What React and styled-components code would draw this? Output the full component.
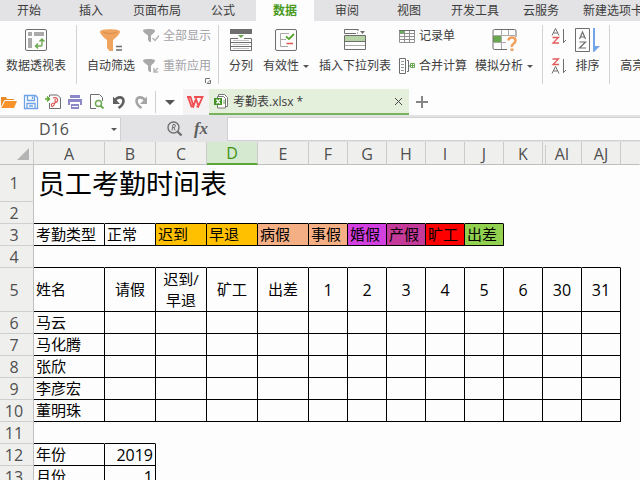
import React from "react";
import styled, { createGlobalStyle } from "styled-components";

const GlobalStyle = createGlobalStyle`
  *, *::before, *::after { box-sizing: border-box; }
  body {
    margin: 0;
    background: #fdfdfd;
    color: #3c3c3c;
    font-family: "Open Sans", "Noto Sans CJK SC", sans-serif;
    font-size: 12px;
    line-height: 16px;
    overflow: hidden;
  }
  button, input { font: inherit; color: inherit; margin: 0; }
  svg { display: block; flex: none; }
`;

const Window = styled.div`
  display: flex;
  flex-direction: column;
  height: 100vh;
  overflow: hidden;
  white-space: nowrap;
`;

/* ---------- menu tabs ---------- */

const MenuBar = styled.nav`
  display: flex;
  flex: none;
  gap: 4px;
  height: 21px;
  background: #e3e3e5;
  overflow: hidden;
`;

const MenuTab = styled.button`
  flex: none;
  min-width: 58px;
  padding: 0 9px;
  border: 0;
  background: ${(p) => (p.$active ? "#fdfdfd" : "transparent")};
  color: ${(p) => (p.$active ? "#4a9a1f" : "#3c3c3c")};
  font-weight: ${(p) => (p.$active ? 700 : 400)};
`;

/* ---------- ribbon ---------- */

const Ribbon = styled.div`
  display: flex;
  flex: none;
  height: 67px;
  padding: 4px 0;
  background: #fdfdfd;
  overflow: hidden;
`;

const Group = styled.div`
  position: relative;
  display: flex;
  flex: none;
  gap: 10px;
  padding: 3px 9px 0 10px;
  height: 59px;
  border-right: 1px solid #d2d2d2;
  &:first-child { padding: 3px 10px 0 6px; }
  &:last-child { border-right: 0; }
`;

const BigButton = styled.button`
  display: flex;
  flex-direction: column;
  align-items: center;
  gap: 6px;
  height: 46px;
  padding: 0;
  border: 0;
  background: none;
`;

const IconBox = styled.span`
  display: flex;
  align-items: center;
  justify-content: center;
  height: 24px;
`;

const Label = styled.span`
  display: flex;
  align-items: center;
  gap: 4px;
  height: 16px;
`;

const Stack = styled.div`
  display: flex;
  flex-direction: column;
  gap: 14px;
  margin: 0 -2px;
`;

const SmallButton = styled.button`
  display: flex;
  align-items: center;
  gap: 4px;
  height: 16px;
  padding: 0;
  border: 0;
  background: none;
  &:disabled { color: #a3a3a8; }
`;

const Launcher = styled.button`
  position: absolute;
  right: 7px;
  bottom: 0;
  padding: 0;
  border: 0;
  background: none;
`;

/* ---------- quick access and document tabs ---------- */

const QuickBar = styled.div`
  display: flex;
  flex: none;
  height: 27px;
  padding-top: 1px;
  background: #fdfdfd;
`;

const QuickTools = styled.div`
  display: flex;
  flex: none;
  align-items: center;
  gap: 6px;
  padding-left: 1px;
`;

const IconButton = styled.button`
  display: flex;
  align-items: center;
  justify-content: center;
  width: 16px;
  height: 20px;
  padding: 0;
  border: 0;
  background: none;
`;

const Divider = styled.span`
  width: 1px;
  height: 22px;
  background: #cfcfcf;
`;

const HomeTab = styled.button`
  display: flex;
  align-items: center;
  justify-content: center;
  width: 26px;
  margin-left: 5px;
  padding: 0 2px 0 0;
  border: 0;
  background: #f5f3f3;
`;

const DocTab = styled.div`
  display: flex;
  flex: none;
  align-items: center;
  gap: 5px;
  width: 200px;
  padding: 1px 3px 0 5px;
  background: #e4efdc;
  border-bottom: 2px solid #78b35c;
`;

const DocName = styled.span`
  flex: 1;
`;

const AddTab = styled(IconButton)`
  width: 26px;
  height: 26px;
`;

/* ---------- formula bar ---------- */

const FormulaBar = styled.div`
  display: flex;
  flex: none;
  align-items: stretch;
  height: 27px;
  padding: 2px 0 1px;
  background: #e3e3e5;
`;

const NameBox = styled.div`
  display: flex;
  align-items: center;
  flex: none;
  width: 121px;
  background: #fdfdfd;
  border: 1px solid #d0d0d2;
  border-left: 0;
`;

const NameInput = styled.input`
  flex: 1;
  min-width: 0;
  padding: 0;
  border: 0;
  outline: 0;
  background: none;
  color: #505050;
  font-size: 16px;
  line-height: 20px;
  text-align: center;
`;

const NameDrop = styled(IconButton)`
  width: 12px;
`;

const FormulaTools = styled.div`
  display: flex;
  flex: none;
  align-items: center;
  justify-content: flex-end;
  gap: 10px;
  width: 106px;
  padding-right: 18px;
`;

const FxButton = styled(IconButton)`
  color: #606060;
  font-family: "Liberation Serif", serif;
  font-size: 17px;
  font-style: italic;
  font-weight: 700;
`;

const FormulaInput = styled.input`
  flex: 1;
  min-width: 0;
  border: 1px solid #d0d0d2;
  border-right: 0;
  outline: 0;
  background: #fdfdfd;
`;

/* ---------- sheet ---------- */

const Sheet = styled.div`
  flex: 1;
  min-height: 0;
  overflow: hidden;
`;

const Grid = styled.table`
  width: 100%;
  min-width: 640px;
  table-layout: fixed;
  border-collapse: separate;
  border-spacing: 0;
  color: #000;
`;

const Col = styled.col`
  width: ${(p) => (p.$w ? `${p.$w}px` : "auto")};
`;

const ColHead = styled.th`
  position: relative;
  height: 23px;
  padding: 1px 0 0;
  background: ${(p) => (p.$active ? "#d5e8d0" : "#eff0ee")};
  color: ${(p) => (p.$active ? "#3f9414" : "#4f4f4f")};
  border-right: 1px solid ${(p) => (p.$last ? "transparent" : "#cbcbcb")};
  border-bottom: ${(p) => (p.$active ? "2px solid #5ba636" : "1px solid #bfbfbf")};
  font-size: 16px;
  font-weight: 400;
  line-height: 20px;
  &::before {
    content: "";
    position: absolute;
    display: ${(p) => (p.$gap ? "block" : "none")};
    top: 3px;
    bottom: 0;
    left: 2px;
    width: 1px;
    background: #cbcbcb;
  }
`;

const Corner = styled(ColHead)`
  & svg { margin-left: 17px; }
`;

const Row = styled.tr`
  height: ${(p) => p.$h}px;
`;

const RowHead = styled.th`
  padding: 0 5px 0 0;
  background: #eff0ee;
  color: #4f4f4f;
  border-right: 1px solid #bfbfbf;
  border-bottom: 1px solid #cfcfcf;
  font-size: 16px;
  font-weight: 400;
  line-height: 20px;
`;

const Cell = styled.td`
  padding: 0 2px;
  background: ${(p) => p.$fill || "transparent"};
  border-right: 1px solid ${(p) => (p.$right ? "#000" : "transparent")};
  border-bottom: 1px solid ${(p) => (p.$bottom ? "#000" : "transparent")};
  text-align: ${(p) => p.$align || "left"};
  font-size: ${(p) => (p.$number ? 16 : 15)}px;
  line-height: ${(p) => (p.$number ? 20 : 21)}px;
  white-space: pre-line;
`;

const TitleCell = styled(Cell)`
  padding: 2px 4px 0;
  font-size: 27px;
  line-height: 32px;
  white-space: nowrap;
`;

/* ---------- icons ---------- */

const G = "#6e6e6e";

const Caret = ({ w = 6, fill = "#555" }) => (
  <svg width={w} height={Math.ceil(w / 2)} viewBox="0 0 6 3"><path d="M0 0h6L3 3z" fill={fill} /></svg>
);

const PivotIcon = () => (
  <svg width="24" height="24" viewBox="0 0 24 24" fill="none">
    <rect x="1.500" y="1.500" width="21" height="21" rx="1.500" stroke={G} />
    <path d="M4 4h4v4H4zM10 4h10v4H10zM4 10h4v10H4z" fill="#aaa" />
    <path d="M18 11.500v5q0 1.500-1.500 1.500h-5M15.500 13.500l2.500-2.500 2.500 2.500M14 15.500L11.500 18l2.500 2.500" stroke="#69a84f" strokeWidth="1.400" />
  </svg>
);

const FilterIcon = () => (
  <svg width="24" height="24" viewBox="0 0 24 24">
    <path d="M1 3.500C1 .500 21 .500 21 3.500c0 2-2.500 5-7 8.500V23H10.500L8 20V12C3.500 8.500 1 5.500 1 3.500z" fill="#efa560" />
    <path d="M4 4C8 6 14 6 18 4" stroke="#d98b45" fill="none" />
    <path d="M17 18.500h6M17 22h6" stroke={G} strokeWidth="1.500" />
  </svg>
);

const ShowAllIcon = () => (
  <svg width="16" height="16" viewBox="0 0 16 16">
    <path d="M0 2.500C0 .500 12 .500 12 2.500 12 4 10.500 5.500 8 7.500V14H6.500L5 12V7.500C2 5.500 0 4 0 2.500z" fill="#a9a9a9" />
    <path d="M9.500 10l2.500 2.500L16 7.500" stroke="#b5b5b5" strokeWidth="1.500" fill="none" />
  </svg>
);

const ReapplyIcon = () => (
  <svg width="16" height="16" viewBox="0 0 16 16">
    <path d="M0 2.500C0 .500 12 .500 12 2.500 12 4 10.500 5.500 8 7.500V14H6.500L5 12V7.500C2 5.500 0 4 0 2.500z" fill="#a9a9a9" />
    <path d="M11 10v4h4M11.500 13.500L15 10" stroke="#b5b5b5" strokeWidth="1.500" fill="none" />
  </svg>
);

const SplitIcon = () => (
  <svg width="24" height="24" viewBox="0 0 24 24">
    <path d="M1 1h22v5H1z" fill={G} />
    <path d="M9 7h6l-3 3z" fill="#69a84f" />
    <path d="M1.500 10.500H9M15 10.500h7.500v12h-21v-12M1.500 14.500h21M1.500 18.500h21" stroke={G} fill="none" />
    <path d="M4 12.500h16M4 16.500h16M4 20.500h16" stroke="#c3c3c3" />
  </svg>
);

const ValidIcon = () => (
  <svg width="24" height="24" viewBox="0 0 24 24" fill="none">
    <rect x="1.500" y="1.500" width="21" height="21" rx="1.500" stroke={G} />
    <path d="M15 5.500H6.500v13H14M6.500 11.500H12" stroke="#aaa" />
    <path d="M12 8.500l3 2.500 5-5" stroke="#59a52e" strokeWidth="1.800" />
    <path d="M12.500 15.500H19" stroke="#e4544e" strokeWidth="1.500" />
  </svg>
);

const DropListIcon = () => (
  <svg width="24" height="24" viewBox="0 0 24 24">
    <path d="M15 1.500H1.500v4H13M15 1v2" stroke={G} fill="none" />
    <path d="M14 4.500h1v1h-1zM17 3h5l-2.500 3z" fill={G} />
    <rect x="2" y="8" width="20" height="5" fill="#b7d3a5" />
    <path d="M1.500 7.500h21v14h-21zM1.500 13.500h21" stroke={G} fill="none" />
    <path d="M2 17.500h20" stroke="#aaa" />
  </svg>
);

const FormIcon = () => (
  <svg width="16" height="14" viewBox="0 0 16 14">
    <path d="M.500 1.500h15v12H.500zM.500 4.500h15M.500 7.500h15M.500 10.500h15M5.500 1v12M10.500 1v12" stroke="#909090" fill="none" />
    <path d="M1 1h4v3H1z" fill="#69b05f" />
    <path d="M0 1.500h16" stroke={G} />
  </svg>
);

const MergeIcon = () => (
  <svg width="16" height="16" viewBox="0 0 16 16" fill="none">
    <path d="M.500.500h6v15h-6z" stroke={G} />
    <path d="M2 3.500h3M2 6.500h3M2 9.500h3M2 12.500h3" stroke="#999" />
    <path d="M8 2.500h1.500v11H8M9.500 8H12" stroke={G} />
    <path d="M11.500 5.500h4v4h-4zM12 7.500h3M13.500 6v3" stroke="#69a84f" />
  </svg>
);

const WhatIfIcon = () => (
  <svg width="25" height="24" viewBox="0 0 25 24" fill="none">
    <path d="M1 8h8v6H1z" fill="#69a84f" />
    <path d="M15 21.500H2.500q-1.500 0-1.500-1.500V3q0-1.500 1.500-1.500h20q1.500 0 1.500 1.500v6" stroke={G} />
    <path d="M1 7.500h22M1 14.500h13M9.500 2v19M16.500 2v6" stroke="#aaa" />
    <path d="M16.500 12.500q0-3 3.500-3t3.500 3q0 2-2 3.200t-1.500 3.300" stroke="#efa05c" strokeWidth="2.500" />
    <path d="M18.500 20.500h3V23h-3z" fill="#efa05c" />
  </svg>
);

const LetterPair = ({ down }) => (
  <svg width="16" height="16" viewBox="0 0 16 16" fill="none">
    <path d={down ? "M1 15.500L4.500 8.500l3.500 7M2.500 13h4" : "M1 7.500L4.500.500 8 7.500M2.500 5h4"} stroke={G} />
    <path d={down ? "M1.500 1h6L2 6.500h6" : "M1.500 9.500h6L2 15h6"} stroke="#e25a5a" strokeWidth="1.300" />
    <path d="M12.500 1v14M12.500 14.500L15 12" stroke={G} />
  </svg>
);

const SortIcon = () => (
  <svg width="25" height="24" viewBox="0 0 25 24" fill="none">
    <path d="M.500.500h14v23H.500z" stroke={G} />
    <path d="M4.500 11L7.500 4l3 7M5.500 9h4M4.500 14h6l-6 6h6.500" stroke={G} strokeWidth="1.200" />
    <path d="M18 0h2v18h5l-6 6h-1z" fill="#72a5e8" />
  </svg>
);

const LauncherIcon = () => (
  <svg width="6" height="6" viewBox="0 0 6 6"><path d="M.500 5V.500H5M5.500 2v3.500H2z" stroke="#777" fill="none" /></svg>
);

const OpenIcon = () => (
  <svg width="16" height="16" viewBox="0 0 16 16">
    <path d="M0 13V3h5l1 2h7v2H4z" fill="#e98a25" />
    <path d="M4 7h12l-3 7H0z" fill="#f8922a" />
    <path d="M13.500 6.500h-10L.500 13" stroke="#fdfdfd" fill="none" />
  </svg>
);

const SaveIcon = () => (
  <svg width="16" height="16" viewBox="0 0 16 16" fill="none" stroke="#6fa3e8" strokeWidth="1.300">
    <path d="M1.500 1.500h11l2 2v11h-13zM4.500 1.500v5h7v-5M4 14.500v-5h8v5M6 12h4" />
    <path d="M9.500 2.500v2.500" />
  </svg>
);

const PdfIcon = () => (
  <svg width="16" height="16" viewBox="0 0 16 16" fill="none">
    <path d="M4.500 3V1h8l3 3v10.500h-11V9" stroke={G} />
    <path d="M0 5h4M2 2.500L4.500 5 2 7.500" stroke="#59a52e" strokeWidth="1.300" />
    <path d="M8 4q4-1 4.500 1.500T9.500 9q-3.500 0-3 2.500t2.500-.500T10 5" stroke="#d95757" strokeWidth="1.200" />
  </svg>
);

const PrintIcon = () => (
  <svg width="16" height="16" viewBox="0 0 16 16">
    <path d="M3 1h10v3H3zM1 5h14v6h-2V9H3v2H1zM4 10h8v5H4z" fill="#8c88c9" />
    <path d="M3 8.500h10M5 12.500h6" stroke="#fff" />
  </svg>
);

const PreviewIcon = () => (
  <svg width="16" height="16" viewBox="0 0 16 16" fill="none">
    <path d="M7 14.500H1.500V.500h9l3 3V7" stroke={G} />
    <circle cx="9.500" cy="9.500" r="3" stroke="#69a84f" strokeWidth="1.400" />
    <path d="M11.500 11.500l3 3" stroke="#69a84f" strokeWidth="1.800" />
  </svg>
);

const UndoIcon = ({ color, flip }) => (
  <svg width="16" height="16" viewBox="0 0 16 16" fill="none">
    <g transform={flip ? "translate(16 0) scale(-1 1)" : undefined}>
      <path d="M4 6.500C6 2.500 12.500 2 12.500 7c0 3-2 5-5 7" stroke={color} strokeWidth="2.600" />
      <path d="M2 2.500v7.500h7z" fill={color} />
    </g>
  </svg>
);

const WpsIcon = () => (
  <svg width="17" height="12" viewBox="0 0 17 12" fill="none" stroke="#f04c52" strokeWidth="1.800">
    <path d="M0 1h3.500l3 9L9 3l2.500 7L15.500 1H7" />
    <path d="M1 1l3.500 9.500H7M9.500 10.500h2.500" />
  </svg>
);

const SheetIcon = () => (
  <svg width="14" height="15" viewBox="0 0 14 15">
    <path d="M4.500 3V.500h6l3 3v9h-3" fill="#fff" stroke="#777" />
    <path d="M3.500 2.500h6l2 2v9.500h-8z" fill="#fff" stroke="#777" />
    <path d="M0 4h8v7H0z" fill="#459326" />
    <path d="M2.500 5.500l3.500 4M6 5.500l-3.500 4" stroke="#fff" strokeWidth="1.200" />
    <path d="M9 7h2M9 9h2" stroke="#69a84f" />
  </svg>
);

const CloseIcon = () => (
  <svg width="9" height="9" viewBox="0 0 9 9"><path d="M1 1l7 7M8 1L1 8" stroke="#444" /></svg>
);

const PlusIcon = () => (
  <svg width="12" height="12" viewBox="0 0 12 12"><path d="M6 0v12M0 6h12" stroke="#858585" strokeWidth="2" /></svg>
);

const LookupIcon = () => (
  <svg width="16" height="16" viewBox="0 0 16 16" fill="none" stroke="#707070">
    <circle cx="6.500" cy="6.500" r="5.500" strokeWidth="1.400" />
    <path d="M10.500 10.500l4 4" strokeWidth="2.400" />
    <path d="M5 9.500l1-6h2q1 1.500-.500 3H5.500M7 6.500l1 3" />
  </svg>
);

const CornerIcon = () => (
  <svg width="12" height="12" viewBox="0 0 12 12"><path d="M12 0v12H0z" fill="#b4b4b4" /></svg>
);

/* ---------- data ---------- */

const MENU = ["开始", "插入", "页面布局", "公式", "数据", "审阅", "视图", "开发工具", "云服务", "新建选项卡"];

const COLUMNS = [
  ["A", 71], ["B", 51], ["C", 51], ["D", 51], ["E", 51], ["F", 39], ["G", 39],
  ["H", 39], ["I", 39], ["J", 39], ["K", 39], ["AI", 39], ["AJ", 39],
];

const FILLS = [null, null, "#ffc000", "#ffc000", "#f4b084", "#f4b084", "#d340e0", "#c43a98", "#ff0000", "#92d050"];

const person = (name) => ({ cells: [name], right: 13, bottom: 13 });

const ROWS = [
  { h: 37, title: "员工考勤时间表" },
  { bottom: 10 },
  {
    cells: ["考勤类型", "正常", "迟到", "早退", "病假", "事假", "婚假", "产假", "旷工", "出差"],
    fills: FILLS, right: 10, bottom: 10,
  },
  { bottom: 13 },
  {
    h: 44, center: true, right: 13, bottom: 13,
    cells: ["姓名", "请假", "迟到/\n早退", "矿工", "出差", 1, 2, 3, 4, 5, 6, 30, 31],
  },
  person("马云"),
  person("马化腾"),
  person("张欣"),
  person("李彦宏"),
  person("董明珠"),
  { bottom: 2 },
  { cells: ["年份", 2019], right: 2, bottom: 2 },
  { cells: ["月份", 1], right: 2, bottom: 2 },
];

const Big = ({ icon, label, caret }) => (
  <BigButton>
    <IconBox>{icon}</IconBox>
    <Label>{label}{caret && <Caret />}</Label>
  </BigButton>
);

function SheetRow({ row, index }) {
  const { h = 22, title, cells = [], fills = [], right = 0, bottom = 0, center } = row;
  const start = title ? 4 : 0;
  return (
    <Row $h={h}>
      <RowHead scope="row">{index + 1}</RowHead>
      {title && <TitleCell colSpan={4}>{title}</TitleCell>}
      {COLUMNS.slice(start).map(([name], k) => {
        const i = k + start;
        const value = cells[i];
        const number = typeof value === "number";
        const align = center && i > 0 ? "center" : number ? "right" : "left";
        return (
          <Cell key={name} $fill={fills[i]} $right={i < right} $bottom={i < bottom} $align={align} $number={number}>
            {value}
          </Cell>
        );
      })}
      <Cell />
    </Row>
  );
}

export default function App() {
  return (
    <Window>
      <GlobalStyle />
      <MenuBar>
        {MENU.map((m) => <MenuTab key={m} $active={m === "数据"}>{m}</MenuTab>)}
      </MenuBar>

      <Ribbon>
        <Group><Big icon={<PivotIcon />} label="数据透视表" /></Group>
        <Group>
          <Big icon={<FilterIcon />} label="自动筛选" />
          <Stack>
            <SmallButton disabled><ShowAllIcon />全部显示</SmallButton>
            <SmallButton disabled><ReapplyIcon />重新应用</SmallButton>
          </Stack>
          <Launcher aria-label="筛选设置"><LauncherIcon /></Launcher>
        </Group>
        <Group>
          <Big icon={<SplitIcon />} label="分列" />
          <Big icon={<ValidIcon />} label="有效性" caret />
          <Big icon={<DropListIcon />} label="插入下拉列表" />
          <Stack>
            <SmallButton><FormIcon />记录单</SmallButton>
            <SmallButton><MergeIcon />合并计算</SmallButton>
          </Stack>
          <Big icon={<WhatIfIcon />} label="模拟分析" caret />
        </Group>
        <Group>
          <Stack>
            <SmallButton aria-label="升序"><LetterPair /></SmallButton>
            <SmallButton aria-label="降序"><LetterPair down /></SmallButton>
          </Stack>
          <Big icon={<SortIcon />} label="排序" />
        </Group>
        <Group><Big label="高亮" /></Group>
      </Ribbon>

      <QuickBar>
        <QuickTools>
          <IconButton aria-label="打开"><OpenIcon /></IconButton>
          <IconButton aria-label="保存"><SaveIcon /></IconButton>
          <IconButton aria-label="输出为PDF"><PdfIcon /></IconButton>
          <IconButton aria-label="打印"><PrintIcon /></IconButton>
          <IconButton aria-label="打印预览"><PreviewIcon /></IconButton>
          <IconButton aria-label="撤销"><UndoIcon color="#606060" /></IconButton>
          <IconButton aria-label="恢复"><UndoIcon color="#a5a5a5" flip /></IconButton>
          <Divider />
          <IconButton aria-label="更多"><Caret w={10} /></IconButton>
        </QuickTools>
        <HomeTab aria-label="首页"><WpsIcon /></HomeTab>
        <DocTab>
          <SheetIcon />
          <DocName>考勤表.xlsx *</DocName>
          <IconButton aria-label="关闭"><CloseIcon /></IconButton>
        </DocTab>
        <AddTab aria-label="新建"><PlusIcon /></AddTab>
      </QuickBar>

      <FormulaBar>
        <NameBox>
          <NameInput aria-label="名称框" defaultValue="D16" />
          <NameDrop aria-label="名称列表"><Caret /></NameDrop>
        </NameBox>
        <FormulaTools>
          <IconButton aria-label="浏览公式结果"><LookupIcon /></IconButton>
          <FxButton aria-label="插入函数">fx</FxButton>
        </FormulaTools>
        <FormulaInput aria-label="编辑栏" />
      </FormulaBar>

      <Sheet>
        <Grid>
          <colgroup>
            <Col $w={34} />
            {COLUMNS.map(([name, w]) => <Col key={name} $w={w} />)}
            <Col />
          </colgroup>
          <thead>
            <tr>
              <Corner><CornerIcon /></Corner>
              {COLUMNS.map(([name]) => (
                <ColHead key={name} scope="col" $active={name === "D"} $gap={name === "AI"}>{name}</ColHead>
              ))}
              <ColHead $last />
            </tr>
          </thead>
          <tbody>
            {ROWS.map((row, i) => <SheetRow key={i} row={row} index={i} />)}
          </tbody>
        </Grid>
      </Sheet>
    </Window>
  );
}
